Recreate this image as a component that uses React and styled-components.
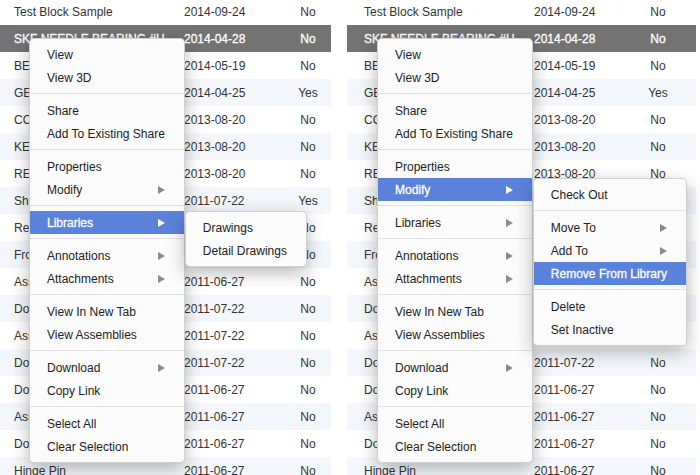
import React from "react";
import styled, { createGlobalStyle } from "styled-components";

const Global = createGlobalStyle`
  html, body { margin: 0; padding: 0; background: #fff; overflow: hidden; }
  body { font-family: "Liberation Sans", Arial, Helvetica, sans-serif; color: #333; }
`;

const Page = styled.div`
  display: flex;
  gap: 16px;
  align-items: flex-start;
  width: 700px;
  height: 475px;
  overflow: hidden;
`;

const Panel = styled.div`
  position: relative;
  width: ${(p) => p.$width}px;
  flex: none;
  height: 475px;
`;

const Table = styled.div`
  margin-top: -2px;
  display: flex;
  flex-direction: column;
`;

const Row = styled.div`
  display: grid;
  grid-template-columns: 170px 106px 36px;
  align-items: center;
  height: 27px;
  padding-left: ${(p) => p.$inset}px;
  font-size: 12px;
  background: ${(p) => (p.$selected ? "#737373" : p.$odd ? "#f3f7fb" : "#ffffff")};
  color: ${(p) => (p.$selected ? "#ffffff" : "#333333")};
  -webkit-text-stroke: ${(p) => (p.$selected ? "0.3px #ffffff" : "0")};
`;

const NameCell = styled.span`
  white-space: nowrap;
  overflow: hidden;
  text-overflow: ellipsis;
  padding-right: 6px;
`;

const DateCell = styled.span`
  white-space: nowrap;
`;

const FlagCell = styled.span`
  text-align: center;
`;

const Menu = styled.div`
  width: max-content;
  background: #fbfbfb;
  border: 1px solid rgba(0, 0, 0, 0.17);
  border-radius: 5px;
  box-shadow: 0 6px 18px rgba(0, 0, 0, 0.28);
  padding: 4px 0;
  font-size: 12px;
  color: #222;
`;

const ContextMenu = styled(Menu)`
  position: absolute;
  left: ${(p) => p.$x}px;
  top: ${(p) => p.$y}px;
  z-index: 1;
`;

const SubMenu = styled(Menu)`
  position: absolute;
  left: calc(100% + 1px);
  top: 0;
  z-index: 2;
`;

const Item = styled.div`
  position: relative;
  height: 23px;
  display: flex;
  align-items: center;
  justify-content: space-between;
  gap: 24px;
  padding: 0 19px 0 17px;
  white-space: nowrap;
  background: ${(p) => (p.$active ? "#5b82db" : "transparent")};
  color: ${(p) => (p.$active ? "#ffffff" : "#222222")};
  -webkit-text-stroke: ${(p) => (p.$active ? "0.3px #ffffff" : "0")};
`;

const Arrow = styled.span`
  width: 0;
  height: 0;
  border-left: 7px solid ${(p) => (p.$active ? "#ffffff" : "#8a8a8a")};
  border-top: 4.5px solid transparent;
  border-bottom: 4.5px solid transparent;
`;

const Separator = styled.div`
  height: 1px;
  background: #e2e2e2;
  margin: 4px 0 5px;
`;

const rows = [
  ["Test Block Sample", "2014-09-24", "No"],
  ["SKF NEEDLE BEARING #HK1010", "2014-04-28", "No"],
  ["BEARING HOUSING", "2014-05-19", "No"],
  ["GEAR ASSEMBLY", "2014-04-25", "Yes"],
  ["COVER PLATE", "2013-08-20", "No"],
  ["KEY SHAFT", "2013-08-20", "No"],
  ["RETAINER RING", "2013-08-20", "No"],
  ["Shaft Coupling", "2011-07-22", "Yes"],
  ["Retaining Clip", "2011-07-22", "No"],
  ["Front Bracket", "2011-06-27", "No"],
  ["Assembly Base", "2011-06-27", "No"],
  ["Door Panel", "2011-07-22", "No"],
  ["Assembly Frame", "2011-07-22", "No"],
  ["Door Hinge", "2011-07-22", "No"],
  ["Door Latch", "2011-06-27", "No"],
  ["Assembly Top", "2011-06-27", "No"],
  ["Door Frame", "2011-06-27", "No"],
  ["Hinge Pin", "2011-06-27", "No"],
];

const mainGroups = [
  [{ label: "View" }, { label: "View 3D" }],
  [{ label: "Share" }, { label: "Add To Existing Share" }],
  [{ label: "Properties" }, { label: "Modify", sub: "modify" }],
  [{ label: "Libraries", sub: "libraries" }],
  [{ label: "Annotations", sub: true }, { label: "Attachments", sub: true }],
  [{ label: "View In New Tab" }, { label: "View Assemblies" }],
  [{ label: "Download", sub: true }, { label: "Copy Link" }],
  [{ label: "Select All" }, { label: "Clear Selection" }],
];

const submenus = {
  libraries: [[{ label: "Drawings" }, { label: "Detail Drawings" }]],
  modify: [
    [{ label: "Check Out" }],
    [
      { label: "Move To", sub: true },
      { label: "Add To", sub: true },
      { label: "Remove From Library", active: true },
    ],
    [{ label: "Delete" }, { label: "Set Inactive" }],
  ],
};

function MenuGroups({ groups, open }) {
  return groups.map((group, gi) => (
    <React.Fragment key={gi}>
      {gi > 0 && <Separator />}
      {group.map((it) => {
        const active = it.active || (typeof it.sub === "string" && it.sub === open);
        return (
          <Item key={it.label} $active={active}>
            <span>{it.label}</span>
            {it.sub && <Arrow $active={active} />}
            {typeof it.sub === "string" && it.sub === open && (
              <SubMenu>
                <MenuGroups groups={submenus[open]} />
              </SubMenu>
            )}
          </Item>
        );
      })}
    </React.Fragment>
  ));
}

function TablePanel({ width, inset, menuX, open }) {
  return (
    <Panel $width={width}>
      <Table>
        {rows.map(([name, date, flag], i) => (
          <Row key={i} $inset={inset} $selected={i === 1} $odd={i % 2 === 1}>
            <NameCell>{name}</NameCell>
            <DateCell>{date}</DateCell>
            <FlagCell>{flag}</FlagCell>
          </Row>
        ))}
      </Table>
      <ContextMenu $x={menuX} $y={38}>
        <MenuGroups groups={mainGroups} open={open} />
      </ContextMenu>
    </Panel>
  );
}

export default function App() {
  return (
    <>
      <Global />
      <Page>
        <TablePanel width={331} inset={14} menuX={29} open="libraries" />
        <TablePanel width={349} inset={17} menuX={30} open="modify" />
      </Page>
    </>
  );
}
